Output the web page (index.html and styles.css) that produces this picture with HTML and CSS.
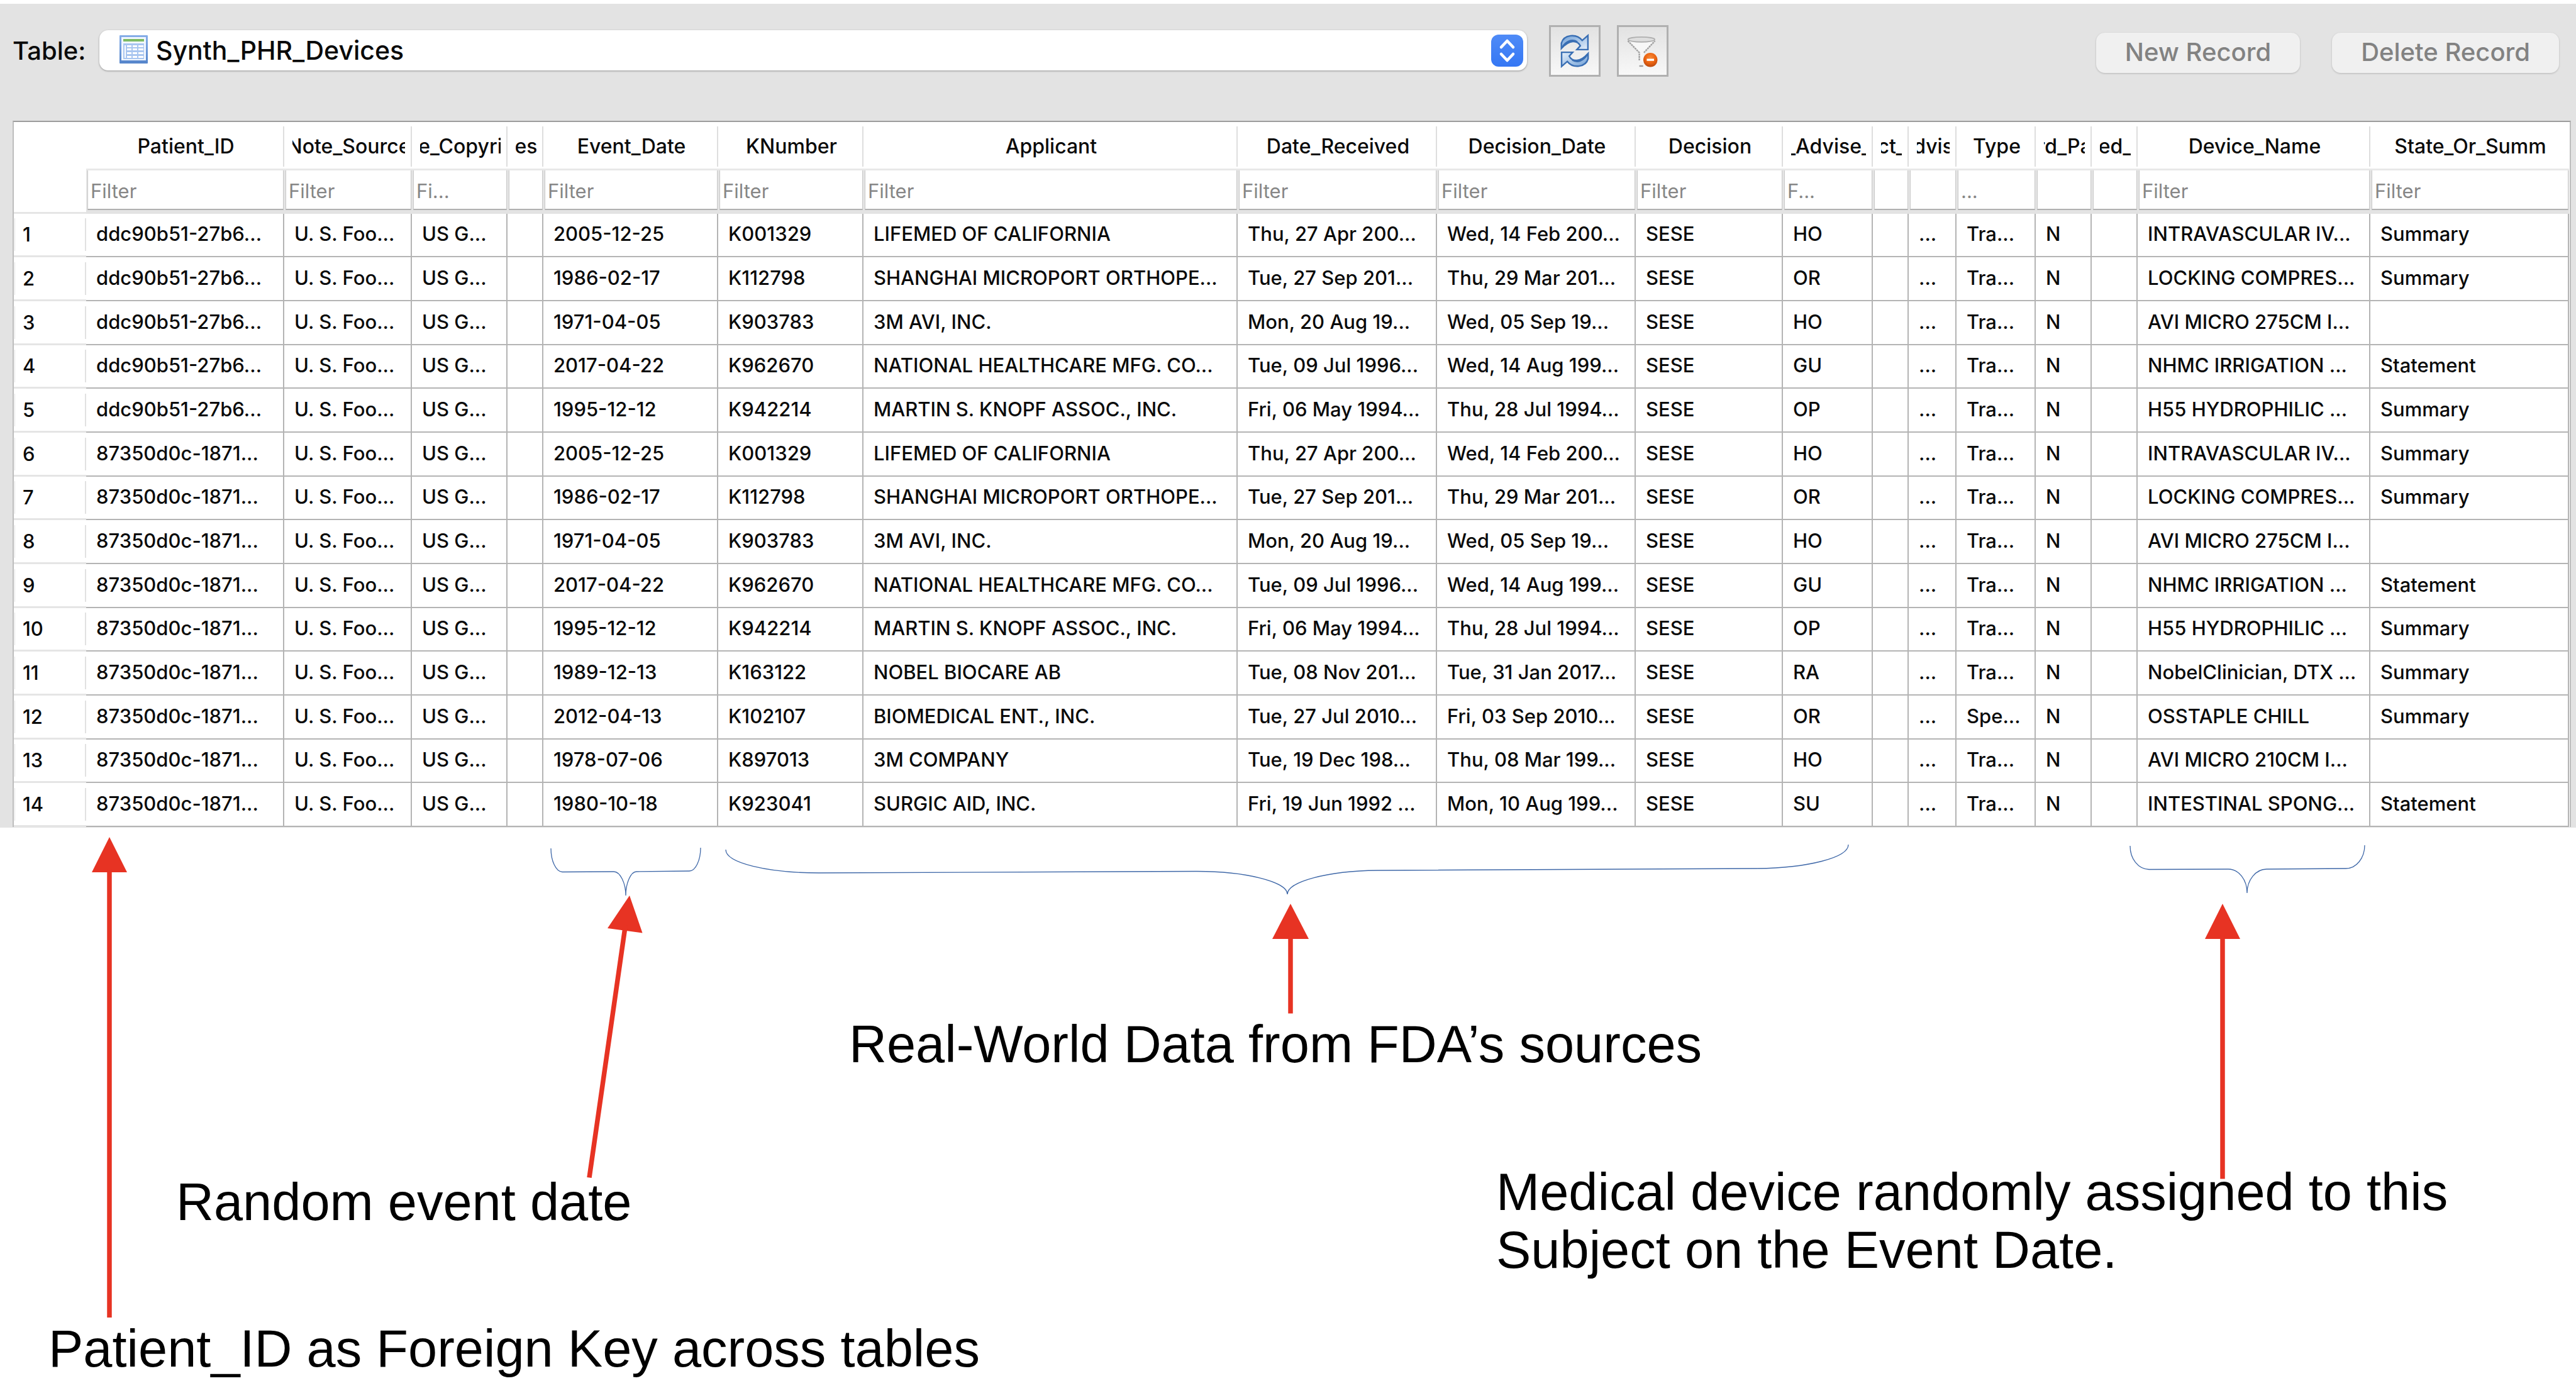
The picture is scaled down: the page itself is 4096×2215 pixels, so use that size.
FILE: index.html
```html
<!DOCTYPE html>
<html lang="en">
<head>
<meta charset="utf-8">
<title>Synth_PHR_Devices</title>
<link rel="stylesheet" href="styles.css">
</head>
<body>
<main>
<section class="browser">
  <div class="toolbar">
    <label class="toolbar-label" for="table-select">Table:</label>
    <div class="picker">
      <svg class="picker-icon" viewBox="0 0 45 45" aria-hidden="true">
        <defs><linearGradient id="sheet" x1="0" y1="0" x2="0" y2="1"><stop offset="0" stop-color="#86aee8"/><stop offset="1" stop-color="#5585cb"/></linearGradient></defs>
        <rect width="45" height="45" rx="1" fill="url(#sheet)"/>
        <rect x="3" y="3" width="39" height="37" fill="#f2f7ff"/>
        <rect x="6" y="6" width="33" height="4" fill="#7dbb63"/>
        <rect x="6" y="13" width="33" height="25" fill="#a9c6f0"/>
        <g fill="#fff"><rect x="8" y="16" width="2" height="20"/><rect x="12" y="16" width="7" height="3"/><rect x="21" y="16" width="7" height="3"/><rect x="30" y="16" width="8" height="3"/><rect x="12" y="21" width="7" height="3"/><rect x="21" y="21" width="7" height="3"/><rect x="30" y="21" width="8" height="3"/><rect x="12" y="27" width="7" height="3"/><rect x="21" y="27" width="7" height="3"/><rect x="30" y="27" width="8" height="3"/><rect x="12" y="33" width="7" height="3"/><rect x="21" y="33" width="7" height="3"/><rect x="30" y="33" width="8" height="3"/></g>
      </svg>
      <select id="table-select" class="picker-select"><option>Synth_PHR_Devices</option></select>
      <svg class="picker-arrows" viewBox="0 0 51 51" aria-hidden="true">
        <defs><linearGradient id="blue" x1="0" y1="0" x2="0" y2="1"><stop offset="0" stop-color="#4f8bf7"/><stop offset="1" stop-color="#3577f4"/></linearGradient></defs>
        <rect width="51" height="51" rx="12" fill="url(#blue)"/>
        <path d="M16 20 L25.500 10 L35 20 M16 31 L25.500 41 L35 31" fill="none" stroke="#fff" stroke-width="4.500" stroke-linecap="round" stroke-linejoin="round"/>
      </svg>
    </div>
    <div class="tools">
      <button class="tool" type="button" aria-label="Refresh">
        <svg viewBox="0 0 158 178" aria-hidden="true">
          <defs><linearGradient id="arc" x1="0" y1="0" x2="1" y2="1"><stop offset="0" stop-color="#6f9fd6"/><stop offset="1" stop-color="#e6f0fb"/></linearGradient>
          <g id="half"><path d="M9 76 V48 C22 2 88 -4 118 34 L148 8 V82 H90 L108 62 C92 30 50 30 9 76 Z" fill="url(#arc)" stroke="#3a6fb4" stroke-width="8" stroke-linejoin="miter"/><path d="M12 72 C34 36 66 26 92 42" fill="none" stroke="#3a6fb4" stroke-width="9"/></g></defs>
          <use href="#half"/>
          <use href="#half" transform="rotate(180 79 89)"/>
        </svg>
      </button>
      <button class="tool" type="button" aria-label="Clear all filters">
        <svg viewBox="0 0 170 178" aria-hidden="true">
          <defs><radialGradient id="stop" cx=".5" cy=".35" r=".65"><stop offset="0" stop-color="#f78b3a"/><stop offset=".6" stop-color="#ea6210"/><stop offset="1" stop-color="#b94a10"/></radialGradient></defs>
          <path d="M8 34 L68 98 V140 L92 150 V98 L150 34 Z" fill="#f7f7f7"/>
          <path d="M8 36 L68 98 V140 M92 98 L150 36" fill="none" stroke="#a2a2a2" stroke-width="8" stroke-dasharray="10 3"/>
          <ellipse cx="79" cy="29" rx="70" ry="13" fill="#dedede" stroke="#b0b0b0" stroke-width="6"/>
          <path d="M68 168 H88" stroke="#9c9c9c" stroke-width="8"/>
          <circle cx="126" cy="136" r="37" fill="url(#stop)"/>
          <rect x="107" y="130" width="38" height="11" fill="#fff"/>
        </svg>
      </button>
    </div>
    <div class="records">
      <button class="record" type="button" disabled>New Record</button>
      <button class="record" type="button" disabled>Delete Record</button>
    </div>
  </div>

  <div class="sheet">
    <table class="grid">
      <colgroup>
        <col class="c-row"><col class="c-patient"><col class="c-source"><col class="c-copy"><col class="c-tiny"><col class="c-event"><col class="c-knum"><col><col class="c-received"><col class="c-date"><col class="c-decision"><col class="c-advise"><col class="c-tiny"><col class="c-review"><col class="c-type"><col class="c-third"><col class="c-exp"><col class="c-device"><col class="c-date">
      </colgroup>
      <thead>
        <tr class="names">
          <td class="corner" rowspan="2"></td>
          <th scope="col"><div><span>Patient_ID</span></div></th><th scope="col"><div><span>Note_Source</span></div></th><th scope="col"><div><span>e_Copyri</span></div></th><th scope="col"><div><span>es</span></div></th><th scope="col"><div><span>Event_Date</span></div></th><th scope="col"><div><span>KNumber</span></div></th><th scope="col"><div><span>Applicant</span></div></th><th scope="col"><div><span>Date_Received</span></div></th><th scope="col"><div><span>Decision_Date</span></div></th><th scope="col"><div><span>Decision</span></div></th><th scope="col"><div><span>_Advise_</span></div></th><th scope="col"><div><span>ct_</span></div></th><th scope="col"><div><span>dvis</span></div></th><th scope="col"><div><span>Type</span></div></th><th scope="col"><div><span>rd_Pa</span></div></th><th scope="col"><div><span>ed_</span></div></th><th scope="col"><div><span>Device_Name</span></div></th><th scope="col"><div><span>State_Or_Summ</span></div></th>
        </tr>
        <tr class="filters">
          <td><input type="text" placeholder="Filter" aria-label="Patient_ID"></td><td><input type="text" placeholder="Filter" aria-label="Note_Source"></td><td><input type="text" placeholder="Fi..." aria-label="Copyright"></td><td><input type="text" aria-label="Notes"></td><td><input type="text" placeholder="Filter" aria-label="Event_Date"></td><td><input type="text" placeholder="Filter" aria-label="KNumber"></td><td><input type="text" placeholder="Filter" aria-label="Applicant"></td><td><input type="text" placeholder="Filter" aria-label="Date_Received"></td><td><input type="text" placeholder="Filter" aria-label="Decision_Date"></td><td><input type="text" placeholder="Filter" aria-label="Decision"></td><td><input type="text" placeholder="F..." aria-label="Advise"></td><td><input type="text" aria-label="Product"></td><td><input type="text" aria-label="Review"></td><td><input type="text" placeholder="..." aria-label="Type"></td><td><input type="text" aria-label="Third_Party"></td><td><input type="text" aria-label="Expedited"></td><td><input type="text" placeholder="Filter" aria-label="Device_Name"></td><td><input type="text" placeholder="Filter" aria-label="State_Or_Summ"></td>
        </tr>
      </thead>
      <tbody>
        <tr><th scope="row"><div>1</div></th><td>ddc90b51-27b6...</td><td>U. S. Foo...</td><td>US G...</td><td></td><td>2005-12-25</td><td>K001329</td><td>LIFEMED OF CALIFORNIA</td><td>Thu, 27 Apr 200...</td><td>Wed, 14 Feb 200...</td><td>SESE</td><td>HO</td><td></td><td>...</td><td>Tra...</td><td>N</td><td></td><td>INTRAVASCULAR IV...</td><td>Summary</td></tr>
        <tr><th scope="row"><div>2</div></th><td>ddc90b51-27b6...</td><td>U. S. Foo...</td><td>US G...</td><td></td><td>1986-02-17</td><td>K112798</td><td>SHANGHAI MICROPORT ORTHOPE...</td><td>Tue, 27 Sep 201...</td><td>Thu, 29 Mar 201...</td><td>SESE</td><td>OR</td><td></td><td>...</td><td>Tra...</td><td>N</td><td></td><td>LOCKING COMPRES...</td><td>Summary</td></tr>
        <tr><th scope="row"><div>3</div></th><td>ddc90b51-27b6...</td><td>U. S. Foo...</td><td>US G...</td><td></td><td>1971-04-05</td><td>K903783</td><td>3M AVI, INC.</td><td>Mon, 20 Aug 19...</td><td>Wed, 05 Sep 19...</td><td>SESE</td><td>HO</td><td></td><td>...</td><td>Tra...</td><td>N</td><td></td><td>AVI MICRO 275CM I...</td><td></td></tr>
        <tr><th scope="row"><div>4</div></th><td>ddc90b51-27b6...</td><td>U. S. Foo...</td><td>US G...</td><td></td><td>2017-04-22</td><td>K962670</td><td>NATIONAL HEALTHCARE MFG. CO...</td><td>Tue, 09 Jul 1996...</td><td>Wed, 14 Aug 199...</td><td>SESE</td><td>GU</td><td></td><td>...</td><td>Tra...</td><td>N</td><td></td><td>NHMC IRRIGATION ...</td><td>Statement</td></tr>
        <tr><th scope="row"><div>5</div></th><td>ddc90b51-27b6...</td><td>U. S. Foo...</td><td>US G...</td><td></td><td>1995-12-12</td><td>K942214</td><td>MARTIN S. KNOPF ASSOC., INC.</td><td>Fri, 06 May 1994...</td><td>Thu, 28 Jul 1994...</td><td>SESE</td><td>OP</td><td></td><td>...</td><td>Tra...</td><td>N</td><td></td><td>H55 HYDROPHILIC ...</td><td>Summary</td></tr>
        <tr><th scope="row"><div>6</div></th><td>87350d0c-1871...</td><td>U. S. Foo...</td><td>US G...</td><td></td><td>2005-12-25</td><td>K001329</td><td>LIFEMED OF CALIFORNIA</td><td>Thu, 27 Apr 200...</td><td>Wed, 14 Feb 200...</td><td>SESE</td><td>HO</td><td></td><td>...</td><td>Tra...</td><td>N</td><td></td><td>INTRAVASCULAR IV...</td><td>Summary</td></tr>
        <tr><th scope="row"><div>7</div></th><td>87350d0c-1871...</td><td>U. S. Foo...</td><td>US G...</td><td></td><td>1986-02-17</td><td>K112798</td><td>SHANGHAI MICROPORT ORTHOPE...</td><td>Tue, 27 Sep 201...</td><td>Thu, 29 Mar 201...</td><td>SESE</td><td>OR</td><td></td><td>...</td><td>Tra...</td><td>N</td><td></td><td>LOCKING COMPRES...</td><td>Summary</td></tr>
        <tr><th scope="row"><div>8</div></th><td>87350d0c-1871...</td><td>U. S. Foo...</td><td>US G...</td><td></td><td>1971-04-05</td><td>K903783</td><td>3M AVI, INC.</td><td>Mon, 20 Aug 19...</td><td>Wed, 05 Sep 19...</td><td>SESE</td><td>HO</td><td></td><td>...</td><td>Tra...</td><td>N</td><td></td><td>AVI MICRO 275CM I...</td><td></td></tr>
        <tr><th scope="row"><div>9</div></th><td>87350d0c-1871...</td><td>U. S. Foo...</td><td>US G...</td><td></td><td>2017-04-22</td><td>K962670</td><td>NATIONAL HEALTHCARE MFG. CO...</td><td>Tue, 09 Jul 1996...</td><td>Wed, 14 Aug 199...</td><td>SESE</td><td>GU</td><td></td><td>...</td><td>Tra...</td><td>N</td><td></td><td>NHMC IRRIGATION ...</td><td>Statement</td></tr>
        <tr><th scope="row"><div>10</div></th><td>87350d0c-1871...</td><td>U. S. Foo...</td><td>US G...</td><td></td><td>1995-12-12</td><td>K942214</td><td>MARTIN S. KNOPF ASSOC., INC.</td><td>Fri, 06 May 1994...</td><td>Thu, 28 Jul 1994...</td><td>SESE</td><td>OP</td><td></td><td>...</td><td>Tra...</td><td>N</td><td></td><td>H55 HYDROPHILIC ...</td><td>Summary</td></tr>
        <tr><th scope="row"><div>11</div></th><td>87350d0c-1871...</td><td>U. S. Foo...</td><td>US G...</td><td></td><td>1989-12-13</td><td>K163122</td><td>NOBEL BIOCARE AB</td><td>Tue, 08 Nov 201...</td><td>Tue, 31 Jan 2017...</td><td>SESE</td><td>RA</td><td></td><td>...</td><td>Tra...</td><td>N</td><td></td><td>NobelClinician, DTX ...</td><td>Summary</td></tr>
        <tr><th scope="row"><div>12</div></th><td>87350d0c-1871...</td><td>U. S. Foo...</td><td>US G...</td><td></td><td>2012-04-13</td><td>K102107</td><td>BIOMEDICAL ENT., INC.</td><td>Tue, 27 Jul 2010...</td><td>Fri, 03 Sep 2010...</td><td>SESE</td><td>OR</td><td></td><td>...</td><td>Spe...</td><td>N</td><td></td><td>OSSTAPLE CHILL</td><td>Summary</td></tr>
        <tr><th scope="row"><div>13</div></th><td>87350d0c-1871...</td><td>U. S. Foo...</td><td>US G...</td><td></td><td>1978-07-06</td><td>K897013</td><td>3M COMPANY</td><td>Tue, 19 Dec 198...</td><td>Thu, 08 Mar 199...</td><td>SESE</td><td>HO</td><td></td><td>...</td><td>Tra...</td><td>N</td><td></td><td>AVI MICRO 210CM I...</td><td></td></tr>
        <tr><th scope="row"><div>14</div></th><td>87350d0c-1871...</td><td>U. S. Foo...</td><td>US G...</td><td></td><td>1980-10-18</td><td>K923041</td><td>SURGIC AID, INC.</td><td>Fri, 19 Jun 1992 ...</td><td>Mon, 10 Aug 199...</td><td>SESE</td><td>SU</td><td></td><td>...</td><td>Tra...</td><td>N</td><td></td><td>INTESTINAL SPONG...</td><td>Statement</td></tr>
      </tbody>
    </table>
  </div>
</section>

<section class="notes">
  <svg class="notes-lines" viewBox="0 0 4096 899" aria-hidden="true">
    <g fill="none" stroke="#3f68a8" stroke-width="1.300">
      <path d="M876 33 C876 53 884 70 894 70.500 L976 70 C986 70 995 88 995 108 C995 88 1003 70 1012 70 L1096 69 C1106 69 1114 52 1114 32"/>
      <path d="M1154 35 C1154 56 1220 72 1302 72 L1900 69.500 C1980 69 2047 86 2047 106 C2047 86 2110 69 2190 68 L2794 65 C2874 64 2939 48 2939 27"/>
      <path d="M3387 29 C3387 50 3400 66 3417 66.500 L3543 66 C3560 66 3573 83 3573 104 C3573 83 3587 66 3604 66 L3730 65 C3747 65 3760 48 3760 28"/>
    </g>
    <g fill="#e73323" stroke="none">
      <path d="M174 15 L202 71 H146 Z"/>
      <path d="M1001 108 L1021.500 167.500 L966 160 Z"/>
      <path d="M2052 121 L2081 177 H2023 Z"/>
      <path d="M3534 121 L3562 177 H3506 Z"/>
    </g>
    <g stroke="#e73323" stroke-width="7.500">
      <path d="M174 65 V779"/>
      <path d="M994.500 155 L937 556.500"/>
      <path d="M2052 170 V295.500"/>
      <path d="M3534 170 V558.500"/>
    </g>
  </svg>
  <p class="note note-source">Real-World Data from FDA’s sources</p>
  <p class="note note-event">Random event date</p>
  <p class="note note-device">Medical device randomly assigned to this<br>Subject on the Event Date.</p>
  <p class="note note-key">Patient_ID as Foreign Key across tables</p>
</section>
</main>
</body>
</html>
```
FILE: styles.css
```css
* { box-sizing: border-box; }
body {
  margin: 0;
  background: #fff;
  color: #0a0a0a;
  font-family: Inter, "Liberation Sans", sans-serif;
}
main { padding-top: 6px; }

.browser {
  background: #e3e3e3;
  padding: 0 8px 1px 20px;
}

/* toolbar */
.toolbar {
  display: flex;
  align-items: center;
  height: 148px;
  margin-bottom: 38px;
  padding-right: 19px;
}
.toolbar-label {
  width: 138px;
  padding-top: 2px;
  font-size: 40px;
  line-height: 48px;
  font-weight: 500;
}
.picker {
  position: relative;
  flex: 1;
  height: 64px;
}
.picker-select {
  appearance: none;
  display: block;
  width: 100%;
  height: 64px;
  border: 0;
  border-radius: 14px;
  padding: 1px 70px 0 90px;
  background: #fff;
  box-shadow: 0 1px 3px rgba(0, 0, 0, .35);
  color: #0a0a0a;
  font: 500 41px/63px Inter, "Liberation Sans", sans-serif;
}
.picker-icon {
  position: absolute;
  left: 32px;
  top: 8px;
  width: 45px;
  height: 45px;
  pointer-events: none;
}
.picker-arrows {
  position: absolute;
  right: 6px;
  top: 7px;
  width: 51px;
  height: 51px;
  pointer-events: none;
}
.tools {
  display: flex;
  gap: 26px;
  margin-left: 35px;
  padding-top: 2px;
}
.tool {
  display: flex;
  align-items: center;
  justify-content: center;
  width: 82px;
  height: 82px;
  padding: 0;
  border: 3px solid #b0b0b0;
  background: linear-gradient(#e2e2e2, #f8f8f8);
}
.tool svg { height: 54px; }
.records {
  display: flex;
  gap: 51px;
  margin-left: 680px;
  padding-top: 8px;
}
.record {
  height: 64px;
  padding: 0 46px 2px;
  border: 0;
  border-radius: 14px;
  background: #f0f0f0;
  box-shadow: 0 1px 3px rgba(0, 0, 0, .2);
  color: #828282;
  font: 500 40px/62px Inter, "Liberation Sans", sans-serif;
}

/* data sheet */
.sheet {
  background: #fff;
  border: solid #bdbdbd;
  border-width: 2px 2px 0;
  border-top-color: #9c9c9c;
  padding-right: 1px;
}
.grid {
  width: 100%;
  table-layout: fixed;
  border-collapse: separate;
  border-spacing: 0;
  font-size: 31px;
  font-weight: 500;
}
.c-row { width: 115px; }
.c-patient { width: 315px; }
.c-source { width: 203px; }
.c-copy { width: 152px; }
.c-tiny { width: 57px; }
.c-event { width: 278px; }
.c-knum { width: 231px; }
.c-received { width: 317px; }
.c-date { width: 316px; }
.c-decision { width: 234px; }
.c-advise { width: 143px; }
.c-review { width: 76px; }
.c-type { width: 126px; }
.c-third { width: 89px; }
.c-exp { width: 73px; }
.c-device { width: 370px; }

.grid th { font-weight: 500; }
.corner {
  padding: 0;
  border-bottom: 3px solid #e5e5e5;
}
.names th {
  padding: 7px 0 3px;
  border-bottom: 3px solid #e8e8e8;
  font-size: 32px;
}
.names th div {
  height: 64px;
  border-right: 2px solid #dedede;
  padding: 0 9px 0 13px;
  line-height: 64px;
}
.names th:last-child div { border-right-color: transparent; }
.names span {
  display: flex;
  justify-content: center;
  overflow: hidden;
  white-space: nowrap;
}
.filters td {
  height: 69px;
  padding: 0 1px 6px 2px;
  background: #e3e3e3;
}
.filters input {
  display: block;
  width: 100%;
  height: 63px;
  margin: 0;
  border: solid #c9c9c9;
  border-width: 0 1px 2px;
  border-bottom-color: #b0b0b0;
  border-radius: 0;
  padding: 4px 0 0 4px;
  background: #fff;
  font: 400 31px/36px Inter, "Liberation Sans", sans-serif;
}
.filters input::placeholder { color: #868686; opacity: 1; }

.grid tbody td {
  height: 70px;
  padding: 0 0 3px 16px;
  border: solid #b4b4b4;
  border-width: 0 2px 2px 0;
  line-height: 62px;
  white-space: nowrap;
  overflow: hidden;
}
.grid tbody th {
  padding: 0;
  border-bottom: 3px solid #e5e5e5;
  text-align: left;
}
.grid tbody th div {
  height: 52px;
  border: solid #e2e2e2;
  border-width: 0 2px 0 1px;
  margin-left: 1px;
  padding-left: 12px;
  line-height: 52px;
}
/* a row pitch a little under 70px */
.grid tbody tr:nth-child(3n+1) td { height: 69px; }

/* annotations */
.notes { position: relative; }
.notes-lines {
  display: block;
  width: 100%;
}
.note {
  position: absolute;
  margin: 0;
  color: #000;
  font: 83px/92px "Liberation Sans", Arial, sans-serif;
  white-space: nowrap;
}
.note-source { left: 1350px; top: 299px; }
.note-event { left: 280px; top: 550px; }
.note-device { left: 2379px; top: 534px; }
.note-key { left: 77px; top: 783px; }
```
